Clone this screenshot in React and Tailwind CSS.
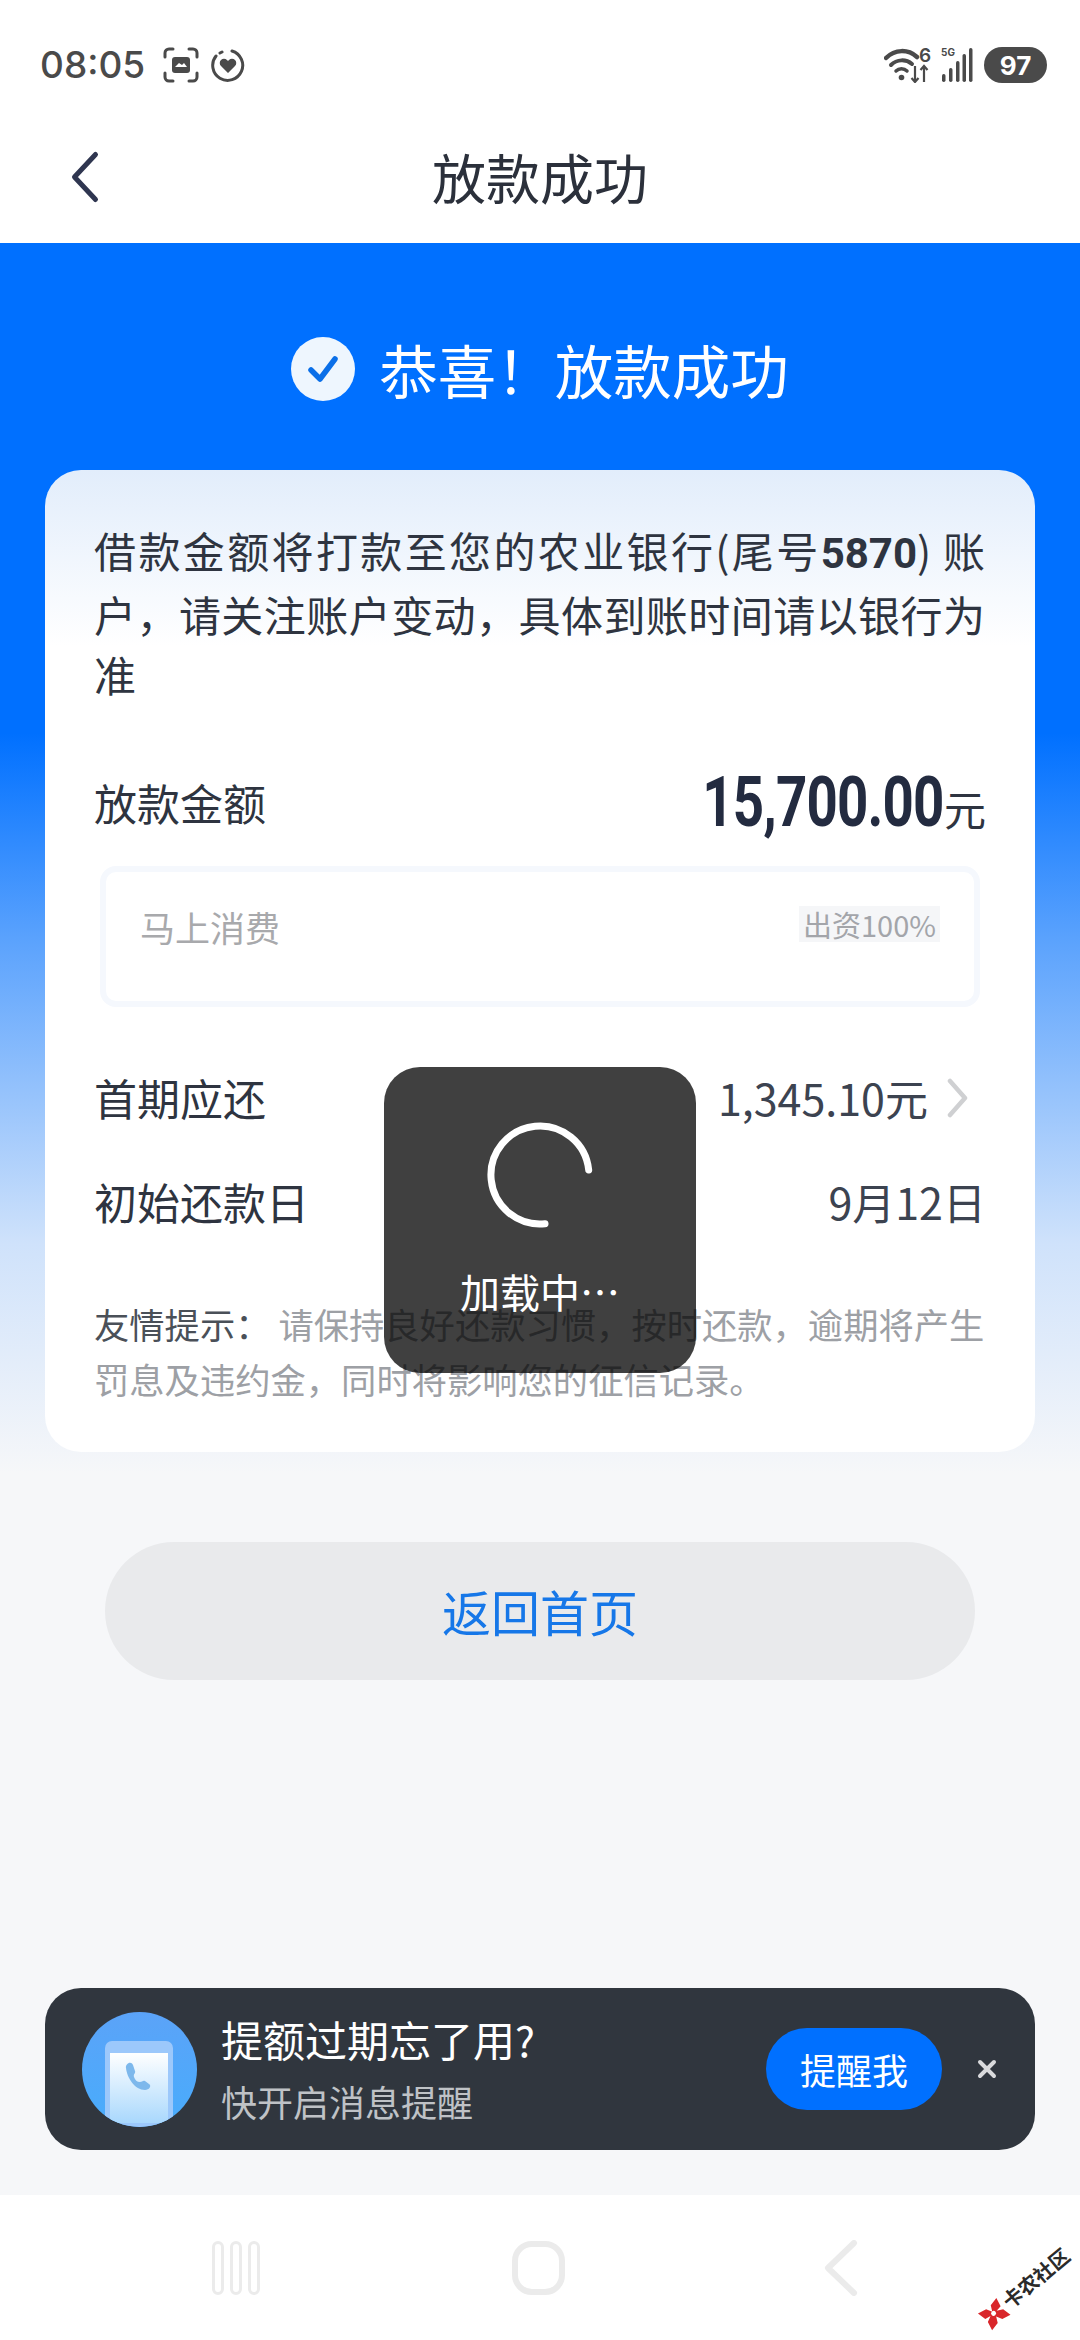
import React from "react";

const CJK = `"Noto Sans CJK SC", "Noto Sans", sans-serif`;

function WifiIcon() {
  return (
    <svg width="51" height="36" viewBox="0 0 51 36" fill="none">
      <path d="M2 11C11 2 24 2 33 10" stroke="#4a4a4a" strokeWidth="4.5" strokeLinecap="round" />
      <path d="M7 18C13 12 22 12 28 17" stroke="#4a4a4a" strokeWidth="4" strokeLinecap="round" />
      <path d="M12 24C15 21 20 21 23 24" stroke="#4a4a4a" strokeWidth="3.5" strokeLinecap="round" />
      <circle cx="17.5" cy="30.5" r="2.8" fill="#4a4a4a" />
      <path d="M31 19V35M27.5 31l3.5 4 3.5-4" stroke="#4a4a4a" strokeWidth="2.2" />
      <path d="M40 35V19M36.5 23l3.5-4 3.5 4" stroke="#4a4a4a" strokeWidth="2.2" />
      <text x="35" y="15" fontSize="19" fontWeight="600" fill="#4a4a4a" fontFamily="Inter, sans-serif">6</text>
    </svg>
  );
}

function SignalIcon() {
  return (
    <svg width="32" height="36" viewBox="0 0 32 36">
      <text x="0" y="9" fontSize="10" fontWeight="700" fill="#4a4a4a" fontFamily="Inter, sans-serif">5G</text>
      <rect x="1" y="27" width="3.5" height="8" rx="1.7" fill="#4a4a4a" />
      <rect x="8" y="21" width="3.5" height="14" rx="1.7" fill="#4a4a4a" />
      <rect x="15" y="14" width="3.5" height="21" rx="1.7" fill="#4a4a4a" />
      <rect x="21.5" y="7" width="3.5" height="28" rx="1.7" fill="#4a4a4a" />
      <rect x="28" y="1" width="3.5" height="34" rx="1.7" fill="#4a4a4a" />
    </svg>
  );
}

function StatusBar() {
  return (
    <div className="h-[115px] flex items-center justify-between pl-[40px] pr-[33px] pt-[15px] bg-white">
      <div className="flex items-center">
        <span className="text-[37px] font-medium text-[#4a4a4a] font-['Inter']">08:05</span>
        <svg className="ml-[18px]" width="36" height="36" viewBox="0 0 36 36" fill="none">
          <path d="M2 10V6a4 4 0 0 1 4-4h4M26 2h4a4 4 0 0 1 4 4v4M34 26v4a4 4 0 0 1-4 4h-4M10 34H6a4 4 0 0 1-4-4v-4" stroke="#4a4a4a" strokeWidth="3" strokeLinecap="round" />
          <rect x="9" y="10" width="18" height="16" rx="3" fill="#4a4a4a" />
          <path d="M12 20l4-4 3 2 2-2 3 4z" fill="#fff" />
        </svg>
        <svg className="ml-[12px]" width="34" height="34" viewBox="0 0 34 34" fill="none">
          <path d="M21 3a15 15 0 1 1-16 5M9 5l2-1" stroke="#4a4a4a" strokeWidth="3" strokeLinecap="round" />
          <path d="M17 25l-7-7a4.2 4.2 0 0 1 6-6l1 1 1-1a4.2 4.2 0 0 1 6 6z" fill="#4a4a4a" />
        </svg>
      </div>
      <div className="flex items-center">
        <WifiIcon />
        <span className="w-[6px]" />
        <SignalIcon />
        <span className="ml-[11px] w-[63px] h-[36px] rounded-full bg-[#4a4a4a] text-white text-[26px] font-bold flex items-center justify-center font-['Inter']">97</span>
      </div>
    </div>
  );
}

function NavBar() {
  return (
    <div className="relative h-[128px] flex items-center justify-center bg-white">
      <svg className="absolute left-[66px] top-[35px]" width="36" height="56" viewBox="0 0 36 56" fill="none">
        <path d="M29.5 4.5L8.5 27l21 22.5" stroke="#2f3650" strokeWidth="5" strokeLinecap="round" strokeLinejoin="round" />
      </svg>
      <h1 className="text-[54px] leading-none text-[#2b303b] mt-[-4px]">放款成功</h1>
    </div>
  );
}

function CheckBadge() {
  return (
    <svg width="64" height="64" viewBox="0 0 64 64">
      <circle cx="32" cy="32" r="32" fill="#eef6fe" />
      <path d="M20 33l9 9 15-20" fill="none" stroke="#0a6fe8" strokeWidth="5.5" strokeLinecap="round" strokeLinejoin="round" />
    </svg>
  );
}

function InfoRow({ label, children }) {
  return (
    <div className="flex items-center justify-between text-[43px] leading-none text-[#2e3440]">
      <span>{label}</span>
      {children}
    </div>
  );
}

function LoanCard() {
  return (
    <div className="mx-[45px] h-[982px] rounded-[36px] bg-gradient-to-b from-[#e2edfb] via-white via-[18%] to-white px-[49px] pt-[50px]">
      <p className="text-[42px] leading-[60px] text-[#2e3440] w-[891px]">
        <span className="block text-justify [text-align-last:justify]">
          借款金额将打款至您的农业银行(尾号<b className="font-bold font-['Roboto']">5870</b>) 账
        </span>
        <span className="block text-justify [text-align-last:justify]">户，请关注账户变动，具体到账时间请以银行为</span>
        <span className="block">准</span>
      </p>
      <div className="mt-[63px]">
        <InfoRow label="放款金额">
          <span className="flex items-baseline">
            <span className="text-[70px] leading-none font-bold text-[#232b40] font-['Roboto'] scale-x-[0.78] origin-right tracking-[-1px]">15,700.00</span>
            <span className="text-[42px]">元</span>
          </span>
        </InfoRow>
      </div>
      <div className="mt-[29px] mx-[6px] h-[141px] rounded-[16px] border-[6px] border-[#f5f8fd] bg-white flex justify-between pl-[34px] pr-[34px] pt-[28px]">
        <span className="text-[35px] leading-[54px] text-[#a8a9ac]">马上消费</span>
        <span className="h-[36px] mt-[6px] px-[4px] bg-[#f5f6f8] text-[29px] leading-[36px] text-[#a3a5aa]">出资100%</span>
      </div>
      <div className="mt-[69px]">
        <InfoRow label="首期应还">
          <span className="flex items-center text-[#3c4350]">
            <span>1,345.10元</span>
            <svg className="ml-[18px] mr-[18px]" width="22" height="40" viewBox="0 0 22 40" fill="none">
              <path d="M4 3l15 17L4 37" stroke="#cfd0d2" strokeWidth="4.5" strokeLinecap="round" strokeLinejoin="round" />
            </svg>
          </span>
        </InfoRow>
      </div>
      <div className="mt-[61px]">
        <InfoRow label="初始还款日">
          <span className="text-[#3c4350]">9月12日</span>
        </InfoRow>
      </div>
      <p className="mt-[73px] text-[35.3px] leading-[55px] text-[#9da0a5]">
        <span className="text-[#4a5058]">友情提示：</span> 请保持良好还款习惯，按时还款，逾期将产生罚息及违约金，同时将影响您的征信记录。
      </p>
    </div>
  );
}

function ReminderBanner() {
  return (
    <div className="mx-[45px] h-[162px] rounded-[36px] bg-[#30363e] flex items-center pl-[37px] pr-[32px]">
      <svg width="115" height="115" viewBox="0 0 115 115" className="shrink-0">
        <defs>
          <linearGradient id="disc" x1="0" y1="0" x2="0" y2="1">
            <stop offset="0" stopColor="#5ba3f8" />
            <stop offset="1" stopColor="#48acfc" />
          </linearGradient>
          <linearGradient id="card" x1="0" y1="0" x2="0" y2="1">
            <stop offset="0" stopColor="#ffffff" />
            <stop offset="1" stopColor="#a9d8fd" />
          </linearGradient>
          <clipPath id="discClip"><circle cx="57.5" cy="57.5" r="57.5" /></clipPath>
        </defs>
        <circle cx="57.5" cy="57.5" r="57.5" fill="url(#disc)" />
        <g clipPath="url(#discClip)">
          <rect x="23" y="29" width="68" height="90" rx="7" fill="#9cc8fb" />
          <rect x="28" y="41" width="58" height="70" fill="url(#card)" />
        </g>
        <path d="M44 56c-1-4 5-8 7-3l2 6c1 2-2 3-1 6s3 5 6 5c2 0 3-2 5-1l4 3c3 2 0 6-4 6-10 0-18-12-19-22z" fill="#7db8ec" />
      </svg>
      <div className="ml-[24px] flex-1">
        <p className="text-[42px] leading-[52px] text-white mt-[-2px]">提额过期忘了用?</p>
        <p className="mt-[13px] text-[36px] leading-[46px] text-[#bfc2c6]">快开启消息提醒</p>
      </div>
      <button className="w-[176px] h-[82px] rounded-full bg-[#0070ff] text-white text-[36px] mr-[35px]">提醒我</button>
      <svg width="20" height="20" viewBox="0 0 20 20" className="mr-[6px]">
        <path d="M3 3l14 14M17 3L3 17" stroke="#d9dadc" strokeWidth="4" strokeLinecap="round" />
      </svg>
    </div>
  );
}

function BottomNav() {
  return (
    <div className="relative h-[145px] bg-white flex items-center pl-[212px]">
      <div className="flex gap-[6px]">
        <span className="w-[12px] h-[54px] rounded-full border-[3px] border-[#ebebeb]" />
        <span className="w-[12px] h-[54px] rounded-full border-[3px] border-[#ebebeb]" />
        <span className="w-[12px] h-[54px] rounded-full border-[3px] border-[#ebebeb]" />
      </div>
      <span className="ml-[252px] w-[53px] h-[54px] rounded-[20px] border-[6px] border-[#ebebeb]" />
      <svg className="ml-[258px]" width="36" height="56" viewBox="0 0 36 56" fill="none">
        <path d="M31 3L5 28l26 25" stroke="#ebebeb" strokeWidth="6" strokeLinecap="round" strokeLinejoin="round" />
      </svg>
      {/* watermark */}
      <div className="absolute left-[971px] top-[79px] flex items-center -rotate-[40deg]">
        <svg width="26" height="26" viewBox="0 0 26 26">
          <path d="M1 3l9 2 3 6 3-6 9-2-2 9-6 1 6 3 2 9-9-2-3-6-3 6-9 2 2-9 6-3-6-1z" fill="#d9272b" />
          <circle cx="13" cy="13" r="2.5" fill="#fff" />
        </svg>
        <span className="text-[20px] leading-none font-bold text-[#2a2a2a] ml-[2px] whitespace-nowrap">卡农社区</span>
      </div>
    </div>
  );
}

function LoadingToast() {
  return (
    <div className="absolute left-[384px] top-[1067px] w-[312px] h-[306px] rounded-[36px] bg-black/75 flex flex-col items-center pt-[53px]">
      <svg width="110" height="110" viewBox="0 0 110 110" fill="none">
        <path d="M103.7 50A49 49 0 1 0 60 103.7" stroke="#fff" strokeWidth="7" strokeLinecap="round" />
      </svg>
      <span className="mt-[36px] text-[40px] leading-[50px] text-white">加载中…</span>
    </div>
  );
}

export default function App() {
  return (
    <div className="relative w-[1080px] h-[2340px] overflow-hidden bg-white" style={{ fontFamily: CJK }}>
      <StatusBar />
      <NavBar />
      <main className="h-[1952px] bg-[linear-gradient(180deg,#0070ff_0,#0070ff_490px,#5ca3fd_700px,#cfe2fb_1000px,#f6f7f9_1230px,#f6f7f9_100%)]">
        <div className="h-[227px] flex items-center justify-center gap-[24px] pt-[25px]">
          <CheckBadge />
          <h2 className="text-[58.5px] leading-none text-white">恭喜！放款成功</h2>
        </div>
        <LoanCard />
        <div className="mx-[105px] mt-[90px] h-[138px] rounded-full bg-[#e9eaec] flex items-center justify-center text-[49px] text-[#1677e8]">返回首页</div>
        <div className="mt-[308px]">
          <ReminderBanner />
        </div>
      </main>
      <BottomNav />
      <LoadingToast />
    </div>
  );
}
